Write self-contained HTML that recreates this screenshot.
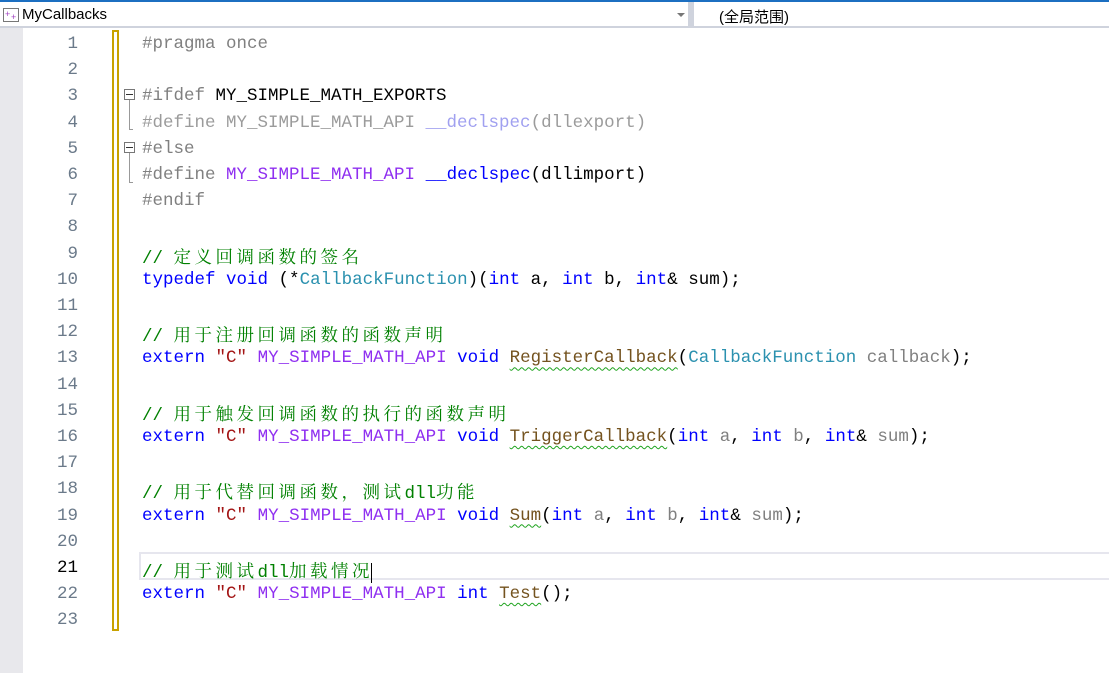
<!DOCTYPE html>
<html><head><meta charset="utf-8"><style>
body{margin:0;width:1109px;height:673px;overflow:hidden;background:#fff;position:relative;font-family:"Liberation Mono","Noto Serif CJK SC",monospace;}
#top{position:absolute;left:0;top:0;width:1109px;height:28px;background:#fff;border-top:2px solid #1c6fc1;box-sizing:border-box;border-bottom:2px solid #cfd3dd;}
#top .t{position:absolute;font-family:"Liberation Sans","Noto Sans CJK SC",sans-serif;font-size:15px;top:4px;color:#000}
#sep{position:absolute;left:688px;top:2px;width:6px;height:24px;background:#cfd3dd}
#gut{position:absolute;left:0;top:28px;width:23px;height:645px;background:#e8e8ec}
.ln{position:absolute;left:40px;width:38px;text-align:right;font-size:17.5px;color:#6b7a8a}
.code{position:absolute;left:142px;font-size:17.5px;white-space:pre;color:#000}
.c{color:#008000}.k{color:#0000ff}.m{color:#8f2ff0}.s{color:#a31515}.f{color:#74531f}.t2{color:#2b91af}.p{color:#808080}.g{color:#9b9b9b}.gm{color:#c49cf0}.gk{color:#a0a0f0}
.z{letter-spacing:3.5px}
.sq{text-decoration:underline wavy #1fa31f;text-underline-offset:4px;text-decoration-thickness:1px}
#bar{position:absolute;left:112px;top:30px;width:3px;height:597px;border:2px solid #c8a200;background:#fff}
.box{position:absolute;left:124px;width:11px;height:11px;border:1px solid #777;box-sizing:border-box;background:#fff}
.box:after{content:"";position:absolute;left:1px;top:4px;width:7px;height:1px;background:#333}
.vl{position:absolute;left:129px;width:1px;background:#999}
#cur{position:absolute;left:139px;top:552px;width:980px;height:24px;border:2px solid #e6e6ee}
</style></head><body>
<div id="top">
<svg style="position:absolute;left:3px;top:6px" width="16" height="14"><rect x="0.5" y="0.5" width="15" height="13" fill="#fff" stroke="#777"/><text x="2" y="9" font-size="9" fill="#a040c0" font-family="Liberation Sans">+</text><text x="8" y="12" font-size="9" fill="#a040c0" font-family="Liberation Sans">+</text></svg>
<span class="t" style="left:22px">MyCallbacks</span>
<span style="position:absolute;left:677px;top:11px;width:0;height:0;border-left:4px solid transparent;border-right:4px solid transparent;border-top:4px solid #777"></span>
<span class="t" style="left:719px">(全局范围)</span>
</div>
<div id="sep"></div>
<div id="gut"></div>
<div id="bar"></div>
<div id="cur"></div>
<div class="box" style="top:89px"></div>
<div class="vl" style="top:100px;height:30px"></div>
<div class="box" style="top:142px"></div>
<div class="vl" style="top:153px;height:30px"></div>
<div style="position:absolute;left:129px;top:129px;width:4px;height:1px;background:#999"></div>
<div style="position:absolute;left:129px;top:182px;width:4px;height:1px;background:#999"></div>
<div id="lines"></div>
<script>
var L=[
'<span class="p">#pragma once</span>','',
'<span class="p">#ifdef</span> MY_SIMPLE_MATH_EXPORTS',
'<span class="g">#define MY_SIMPLE_MATH_API </span><span class="gk">__declspec</span><span class="g">(dllexport)</span>',
'<span class="p">#else</span>',
'<span class="p">#define</span> <span class="m">MY_SIMPLE_MATH_API</span> <span class="k">__declspec</span>(dllimport)',
'<span class="p">#endif</span>','',
'<span class="c">// <span class="z">定义回调函数的签名</span></span>',
'<span class="k">typedef</span> <span class="k">void</span> (*<span class="t2">CallbackFunction</span>)(<span class="k">int</span> a, <span class="k">int</span> b, <span class="k">int</span>&amp; sum);','',
'<span class="c">// <span class="z">用于注册回调函数的函数声明</span></span>',
'<span class="k">extern</span> <span class="s">"C"</span> <span class="m">MY_SIMPLE_MATH_API</span> <span class="k">void</span> <span class="f sq">RegisterCallback</span>(<span class="t2">CallbackFunction</span> <span class="p">callback</span>);','',
'<span class="c">// <span class="z">用于触发回调函数的执行的函数声明</span></span>',
'<span class="k">extern</span> <span class="s">"C"</span> <span class="m">MY_SIMPLE_MATH_API</span> <span class="k">void</span> <span class="f sq">TriggerCallback</span>(<span class="k">int</span> <span class="p">a</span>, <span class="k">int</span> <span class="p">b</span>, <span class="k">int</span>&amp; <span class="p">sum</span>);','',
'<span class="c">// <span class="z">用于代替回调函数，测试</span>dll<span class="z">功能</span></span>',
'<span class="k">extern</span> <span class="s">"C"</span> <span class="m">MY_SIMPLE_MATH_API</span> <span class="k">void</span> <span class="f sq">Sum</span>(<span class="k">int</span> <span class="p">a</span>, <span class="k">int</span> <span class="p">b</span>, <span class="k">int</span>&amp; <span class="p">sum</span>);','',
'<span class="c">// <span class="z">用于测试</span>dll<span class="z">加载情况</span></span><span style="border-left:1px solid #000;margin-left:-2px"></span>',
'<span class="k">extern</span> <span class="s">"C"</span> <span class="m">MY_SIMPLE_MATH_API</span> <span class="k">int</span> <span class="f sq">Test</span>();',''];
var h='';for(var i=0;i<23;i++){var y=30+i*26.2;h+='<div class="ln" style="top:'+(y+4)+'px'+(i==20?';color:#000':'')+'">'+(i+1)+'</div><div class="code" style="top:'+(y+4)+'px">'+L[i]+'</div>';}
document.getElementById('lines').innerHTML=h;
</script>
</body></html>
